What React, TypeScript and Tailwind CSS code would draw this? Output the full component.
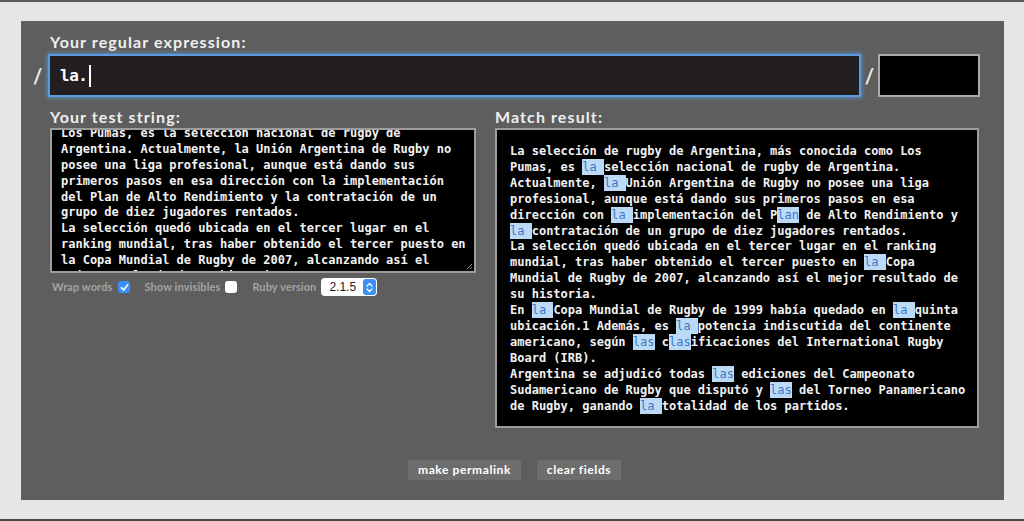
import React from 'react';

// lineas del textarea (ya envueltas como en la captura)
const testLines = [
  'La selección de rugby de Argentina, más conocida como',
  'Los Pumas, es la selección nacional de rugby de',
  'Argentina. Actualmente, la Unión Argentina de Rugby no',
  'posee una liga profesional, aunque está dando sus',
  'primeros pasos en esa dirección con la implementación',
  'del Plan de Alto Rendimiento y la contratación de un',
  'grupo de diez jugadores rentados.',
  'La selección quedó ubicada en el tercer lugar en el',
  'ranking mundial, tras haber obtenido el tercer puesto en',
  'la Copa Mundial de Rugby de 2007, alcanzando así el',
  'mejor resultado de su historia.',
];

// [..] marca una coincidencia
const resultLines = [
  'La selección de rugby de Argentina, más conocida como Los',
  'Pumas, es [la ]selección nacional de rugby de Argentina.',
  'Actualmente, [la ]Unión Argentina de Rugby no posee una liga',
  'profesional, aunque está dando sus primeros pasos en esa',
  'dirección con [la ]implementación del P[lan] de Alto Rendimiento y',
  '[la ]contratación de un grupo de diez jugadores rentados.',
  'La selección quedó ubicada en el tercer lugar en el ranking',
  'mundial, tras haber obtenido el tercer puesto en [la ]Copa',
  'Mundial de Rugby de 2007, alcanzando así el mejor resultado de',
  'su historia.',
  'En [la ]Copa Mundial de Rugby de 1999 había quedado en [la ]quinta',
  'ubicación.1 Además, es [la ]potencia indiscutida del continente',
  'americano, según [las] c[las]ificaciones del International Rugby',
  'Board (IRB).',
  'Argentina se adjudicó todas [las] ediciones del Campeonato',
  'Sudamericano de Rugby que disputó y [las] del Torneo Panamericano',
  'de Rugby, ganando [la ]totalidad de los partidos.',
];

const renderLine = (line: string) =>
  line.split(/\[(.*?)\]/).map((part, i) =>
    i % 2 === 1 ? (
      <span key={i} className="bg-[#bcdaf6] text-[#3a78c8] font-normal py-[1px]">
        {part}
      </span>
    ) : (
      <React.Fragment key={i}>{part}</React.Fragment>
    )
  );

const Checkbox = ({ checked }: { checked: boolean }) =>
  checked ? (
    <span className="w-[12px] h-[12px] rounded-[3px] bg-[#3b8ff6] flex items-center justify-center">
      <svg width="9" height="9" viewBox="0 0 10 10" fill="none">
        <path d="M1.5 5.2 L4 7.8 L8.6 2" stroke="white" strokeWidth="1.8" strokeLinecap="round" strokeLinejoin="round" />
      </svg>
    </span>
  ) : (
    <span className="block w-[12px] h-[12px] rounded-[3px] bg-white" />
  );

export default function App() {
  return (
    <div className="h-[521px] bg-[#e6e6e6] border-t-2 border-b-2 border-t-[#5a5a5a] border-b-[#484848] flex flex-col overflow-hidden">
      <div className="ml-[21px] mt-[19px] w-[983px] h-[479px] bg-[#5e5e5e] flex flex-col font-['Lato',sans-serif]">
        <div className="pl-[29px] pt-[11px] mb-[2px] h-[31px] text-[16px] leading-[20px] font-bold tracking-[1.1px] text-[#efefef]">
          Your regular expression:
        </div>

        <div className="pl-[12px] flex items-center h-[43px]">
          <span className="w-[15px] text-[20px] font-bold text-[#eeeeee]">/</span>
          <div className="w-[813px] h-[43px] bg-[#231f20] border-2 border-[#5b9be0] shadow-[0_0_4px_1px_rgba(91,155,224,0.7)] flex items-center pl-[10px]">
            <span className="font-['DejaVu_Sans_Mono',monospace] text-[16px] font-bold tracking-[-0.5px] text-white">la.</span>
            <span className="w-[1.5px] h-[22px] bg-white ml-[2px]" />
          </div>
          <span className="w-[17px] text-center text-[20px] font-bold text-[#eeeeee]">/</span>
          <div className="w-[102px] h-[43px] bg-black border-2 border-[#a9a9a9]" />
        </div>

        <div className="mt-[10px] pl-[29px] flex gap-[19px]">
          <div className="w-[426px] flex flex-col">
            <div className="h-[20px] mb-[1px] text-[16px] leading-[20px] font-bold tracking-[1.1px] text-[#efefef]">
              Your test string:
            </div>
            <div className="relative h-[145px] bg-black border-2 border-[#9d9d9d] overflow-hidden">
              <div className="-mt-[20px] pl-[9px] font-['DejaVu_Sans_Mono',monospace] text-[12px] leading-[15.9px] font-bold text-[#f2f2f2]">
                {testLines.map((l, i) => (
                  <div key={i} className="whitespace-pre">{l}</div>
                ))}
              </div>
              <svg className="absolute right-[1px] bottom-[1px]" width="7" height="7" viewBox="0 0 7 7">
                <path d="M6 1 L1 6 M6 4 L4 6" stroke="#8a8a8a" strokeWidth="1" />
              </svg>
            </div>
            <div className="mt-[4px] h-[20px] pl-[2px] flex items-center text-[11px] font-bold tracking-[0.1px] text-[#a3a3a3]">
              <span>Wrap words</span>
              <span className="ml-[6px]"><Checkbox checked /></span>
              <span className="ml-[14px]">Show invisibles</span>
              <span className="ml-[5px]"><Checkbox checked={false} /></span>
              <span className="ml-[15px]">Ruby version</span>
              <div className="ml-[5px] w-[56px] h-[18px] bg-white rounded-[4px] flex items-center justify-between pl-[8px] pr-[1px]">
                <span className="font-['Liberation_Sans',sans-serif] font-normal tracking-normal text-[12px] text-[#222]">2.1.5</span>
                <span className="w-[13px] h-[16px] rounded-[3px] bg-[#3b8ff6] flex items-center justify-center">
                  <svg width="7" height="11" viewBox="0 0 7 11" fill="none">
                    <path d="M1 4 L3.5 1.5 L6 4 M1 7 L3.5 9.5 L6 7" stroke="white" strokeWidth="1.3" strokeLinecap="round" strokeLinejoin="round" />
                  </svg>
                </span>
              </div>
            </div>
          </div>

          <div className="w-[484px] flex flex-col">
            <div className="h-[20px] mb-[1px] text-[16px] leading-[20px] font-bold tracking-[1.1px] text-[#efefef]">
              Match result:
            </div>
            <div className="h-[300px] bg-black border-2 border-[#9d9d9d] pl-[13px] pt-[14px] font-['DejaVu_Sans_Mono',monospace] text-[12px] leading-[15.9px] font-bold text-[#f2f2f2]">
              {resultLines.map((l, i) => (
                <div key={i} className="whitespace-pre">{renderLine(l)}</div>
              ))}
            </div>
          </div>
        </div>

        <div className="mt-auto mb-[20px] flex justify-center gap-[16px] pl-[4px]">
          <button className="w-[113px] h-[20px] bg-[#6d6d6d] text-white text-[12px] font-bold tracking-[0.6px]">
            make permalink
          </button>
          <button className="w-[84px] h-[20px] bg-[#6d6d6d] text-white text-[12px] font-bold tracking-[0.6px]">
            clear fields
          </button>
        </div>
      </div>
    </div>
  );
}
